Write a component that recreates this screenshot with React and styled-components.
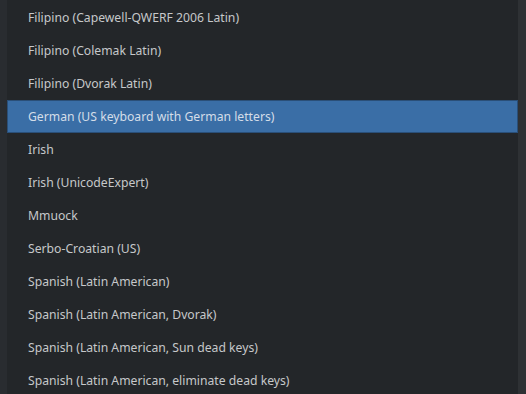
import styled, { createGlobalStyle } from 'styled-components'

const GlobalStyle = createGlobalStyle`
  html, body {
    margin: 0;
    padding: 0;
    background: #232629;
  }
  body {
    font-family: 'Noto Sans', 'DejaVu Sans', sans-serif;
  }
`

const layouts = [
  'Filipino (Capewell-QWERF 2006 Latin)',
  'Filipino (Colemak Latin)',
  'Filipino (Dvorak Latin)',
  'German (US keyboard with German letters)',
  'Irish',
  'Irish (UnicodeExpert)',
  'Mmuock',
  'Serbo-Croatian (US)',
  'Spanish (Latin American)',
  'Spanish (Latin American, Dvorak)',
  'Spanish (Latin American, Sun dead keys)',
  'Spanish (Latin American, eliminate dead keys)',
]

const App = () => {
  return (
    <>
      <GlobalStyle />
      <Wrapper>
        <Gutter />
        <List>
          {layouts.map((name, i) => (
            <Row key={name} selected={i === 3}>
              {name}
            </Row>
          ))}
        </List>
        <ScrollTrack />
      </Wrapper>
    </>
  )
}

export default App

const Wrapper = styled.div`
  width: 526px;
  height: 394px;
  display: flex;
  overflow: hidden;
  background: #232629;
`

const Gutter = styled.div`
  width: 7px;
  flex-shrink: 0;
  background: #292c30;
`

const List = styled.div`
  flex: 1;
  padding-top: 1px;
  display: flex;
  flex-direction: column;
`

const Row = styled.div.withConfig({ shouldForwardProp: (p) => p !== 'selected' })`
  height: 33px;
  flex-shrink: 0;
  box-sizing: border-box;
  display: flex;
  align-items: center;
  padding-left: 20px;
  font-size: 12.2px;
  color: ${(p) => (p.selected ? '#d4dde8' : '#c6c8ca')};
  background: ${(p) => (p.selected ? '#3a6ea6' : 'transparent')};
  border: 1px solid ${(p) => (p.selected ? '#2a4f78' : 'transparent')};
  white-space: nowrap;
`

const ScrollTrack = styled.div`
  width: 8px;
  flex-shrink: 0;
  background: #2e3134;
`
